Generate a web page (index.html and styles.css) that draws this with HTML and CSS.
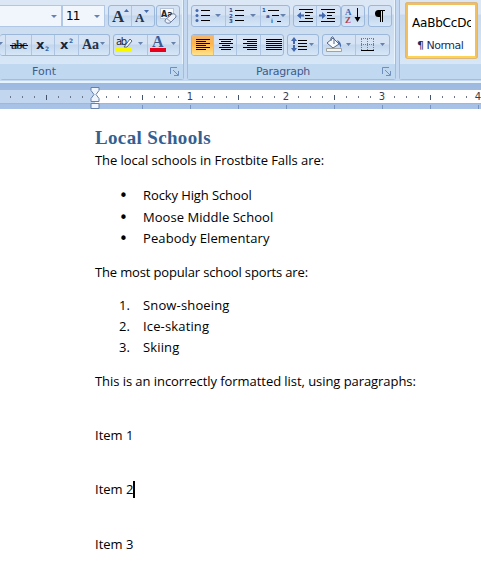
FILE: index.html
```html
<!DOCTYPE html>
<html lang="en">
<head>
<meta charset="utf-8">
<title>Local Schools</title>
<link rel="stylesheet" href="styles.css">
</head>
<body>
<header class="ribbon">
  <section class="group font-group">
    <div class="row">
      <div class="combo family"><i class="arrow"></i></div>
      <div class="combo size"><span>11</span><i class="arrow"></i></div>
      <div class="buttons grow">
        <svg width="46" height="22"><text class="serif" x="4" y="17" font-size="17">A</text><path class="blue" d="M16 7h5l-2.500-3z"/><line class="sep" x1="23.500" x2="23.500" y1="0" y2="22"/><text class="serif" x="27" y="17" font-size="13">A</text><path class="blue" d="M36 5h5l-2.500 3z"/></svg>
      </div>
      <div class="buttons clear">
        <svg width="23" height="22"><rect x="4.500" y="3.500" width="13" height="10" fill="#f7faff" stroke="#b7c4d8"/><text class="sans bold" x="5" y="12" font-size="8">Aa</text><path d="M9 15l7-6q4-1 4 3l-6 6q-5 1-5-3z" fill="#edf2fa" stroke="#6c7f9e"/><path d="M10 13l5 4" stroke="#8797b2"/></svg>
      </div>
    </div>
    <div class="row second">
      <div class="buttons scripts">
        <svg width="110" height="22"><path class="arr" d="M0 8h4l-2.500 3z"/><path class="sep" d="M6.500 0v22M32.500 0v22M55.500 0v22M79.500 0v22"/><text class="serif" x="12" y="15" font-size="12" textLength="16">abc</text><path class="ink" d="M11 11.500h18"/><text class="sans bold" x="37" y="15" font-size="13">x</text><text class="tiny" x="46" y="17">2</text><text class="sans bold" x="61" y="15" font-size="13">x</text><text class="tiny" x="70" y="9">2</text><text class="serif" x="83" y="15" font-size="14" textLength="17">Aa</text><path class="arr" d="M101 8h5l-2.500 3z"/></svg>
      </div>
      <div class="buttons colors">
        <svg width="66" height="22"><path class="sep" d="M34.500 0v22"/><path d="M11 13l6-8 2 2-5 6z" fill="#f7f9fd" stroke="#526685"/><text class="sans" x="3" y="11" font-size="10" textLength="11">ab</text><rect x="3" y="14" width="16" height="4" fill="#f8f800"/><path class="arr" d="M25 8h5l-2.500 3z"/><text class="fontcolor" x="39" y="13">A</text><rect x="37" y="14" width="16" height="4" fill="#e9001b"/><path class="arr" d="M58 8h5l-2.500 3z"/></svg>
      </div>
    </div>
    <footer><span class="font-label">Font</span><svg class="launcher" width="9" height="9"><path d="M.5 7V.5H7M8.500 4v4.500H4M3 3l5 5" /></svg></footer>
  </section>

  <section class="group para-group">
    <div class="row">
      <div class="buttons lists">
        <svg width="98" height="22"><path class="sep" d="M34.500 0v22M69.500 0v22"/><path class="ink" d="M10 5.500h9M10 10.500h9M10 15.500h9M44 5.500h9M44 10.500h9M44 15.500h9M77 5.500h11M81 10.500h7M86 16.500h4"/><g class="blue"><circle cx="6" cy="5.500" r="1.500"/><circle cx="6" cy="10.500" r="1.500"/><circle cx="6" cy="15.500" r="1.500"/></g><path class="arr" d="M24 9h6l-3 3zM59 9h6l-3 3zM89 9h6l-3 3z"/><g class="micro"><text x="38" y="7">1</text><text x="38" y="12.500">2</text><text x="38" y="18">3</text><text x="71" y="7">1</text><text x="75" y="12.500">a</text><text x="80" y="18">i</text></g></svg>
      </div>
      <div class="buttons indents">
        <svg width="47" height="22"><path class="sep" d="M23.500 0v22"/><path class="ink" d="M6 4.500h14M12 7.500h8M12 10.500h5M12 13.500h8M6 16.500h14M28 4.500h14M34 7.500h8M34 10.500h5M34 13.500h8M28 16.500h14"/><path class="blue" d="M4 10.500l4-3.500v2.500h3v2H8V14zM33 10.500L29 7v2.500h-3v2h3V14z"/></svg>
      </div>
      <div class="buttons sort">
        <svg width="23" height="22"><text class="letter" x="4" y="10" fill="#3f66b3">A</text><text class="letter" x="4" y="18" fill="#b83d4c">Z</text><path class="ink" d="M16.500 3v11"/><path d="M13.500 12h6l-3 5z"/></svg>
      </div>
      <div class="buttons mark">
        <svg width="23" height="22"><path d="M17 5h-6.500a3.500 3.500 0 0 0 0 7H12v5h1V6h1v11h1V6h2z"/></svg>
      </div>
    </div>
    <div class="row second">
      <div class="buttons align">
        <svg width="92" height="22"><defs><linearGradient id="hot" x2="0" y2="1"><stop offset="0" stop-color="#efb777"/><stop offset=".45" stop-color="#ffb44a"/><stop offset="1" stop-color="#ffe78f"/></linearGradient></defs><rect width="22" height="22" fill="url(#hot)"/><path class="sep" d="M22.500 0v22M45.500 0v22M69.500 0v22"/><path class="ink" d="M5 5.500h14M5 7.500h10M5 9.500h14M5 11.500h10M5 13.500h14M5 15.500h10M28 5.500h14M30 7.500h10M28 9.500h14M31 11.500h8M28 13.500h14M30 15.500h10M52 5.500h14M56 7.500h10M52 9.500h14M56 11.500h10M52 13.500h14M56 15.500h10M75 5.500h16M75 7.500h16M75 9.500h16M75 11.500h16M75 13.500h16M75 15.500h16"/></svg>
      </div>
      <div class="buttons spacing">
        <svg width="31" height="22"><path class="blue" d="M4 7l3-4 3 4H8v3H6V7zM4 14l3 4 3-4H8v-3H6v3z"/><path class="ink" d="M11 6.500h9M11 9.500h9M11 12.500h9M11 15.500h9"/><path class="arr" d="M22 9h5l-2.500 3z"/></svg>
      </div>
      <div class="buttons shade">
        <svg width="67" height="22"><path class="sep" d="M33.500 0v22"/><path d="M5 9l6-5 6 6-6 4z" fill="#f9fbff" stroke="#53678b"/><path d="M9 7V4q2-3 3 1v5" fill="none" stroke="#53678b"/><path class="blue" d="M15 6q5 2 4 8l-2-4z"/><path d="M4.500 14.500h15v3h-15z" fill="#f5f5f0" stroke="#a0a39f"/><path class="arr" d="M24 9h5l-2.500 3zM58 9h5l-2.500 3z"/><path d="M39.500 5v11M45.500 5v11M51.500 5v11M39 4.500h13M39 10.500h13" fill="none" stroke="#68799a" stroke-dasharray="1 1"/><path class="ink" d="M39 16.500h13"/></svg>
      </div>
    </div>
    <footer><span class="para-label">Paragraph</span><svg class="launcher" width="9" height="9"><path d="M.5 7V.5H7M8.500 4v4.500H4M3 3l5 5" /></svg></footer>
  </section>
  <section class="group styles-group">
    <div class="style-card"><div class="sample">AaBbCcDc</div><div class="style-name">¶ Normal</div></div>
    <footer></footer>
  </section>
</header>

<div class="ruler">
  <svg width="481" height="26">
    <rect y="7" width="95" height="14" fill="#c3d6ef"/><rect x="95" y="7" width="386" height="13" fill="#fff"/>
    <path d="M0 20.500h481" stroke="#9db8df"/>
    <path class="dots" d="M10.500 13v2M22.500 13v2M34.500 13v2M58.500 13v2M70.500 13v2M82.500 13v2M106.500 13v2M118.500 13v2M130.500 13v2M154.500 13v2M166.500 13v2M178.500 13v2M202.500 13v2M214.500 13v2M226.500 13v2M250.500 13v2M262.500 13v2M274.500 13v2M298.500 13v2M310.500 13v2M322.500 13v2M346.500 13v2M358.500 13v2M370.500 13v2M394.500 13v2M406.500 13v2M418.500 13v2M442.500 13v2M454.500 13v2M466.500 13v2"/>
    <path class="ticks" d="M46.500 12v5M142.500 12v5M238.500 12v5M334.500 12v5M430.500 12v5"/>
    <path d="M142.500 22v4M190.500 22v4M238.500 22v4M286.500 22v4M334.500 22v4M382.500 22v4M430.500 22v4M478.500 22v4" stroke="#7793bf"/>
    <g class="numbers"><text x="190" y="17">1</text><text x="286" y="17">2</text><text x="382" y="17">3</text><text x="478" y="17">4</text></g>
    <path d="M91 4.500h8v3l-3 4 3 4v3h-8v-3l3-4-3-4zM91 20.500h8v5h-8z" fill="#edf4fe" stroke="#6580ab"/><path d="M91 18.500h8" stroke="#6580ab"/>
  </svg>
</div>

<main class="document">
  <h1>Local Schools</h1>
  <p class="intro">The local schools in Frostbite Falls are:</p>
  <ul>
    <li><span class="bullet">•</span><span class="rocky">Rocky High School</span></li>
    <li><span class="bullet">•</span><span class="moose">Moose Middle School</span></li>
    <li><span class="bullet">•</span><span class="peabody">Peabody Elementary</span></li>
  </ul>
  <p class="sports">The most popular school sports are:</p>
  <ol>
    <li><span class="number">1.</span><span class="wide">Snow-shoeing</span></li>
    <li><span class="number">2.</span><span class="wide">Ice-skating</span></li>
    <li><span class="number">3.</span><span class="wide">Skiing</span></li>
  </ol>
  <p class="incorrect">This is an incorrectly formatted list, using paragraphs:</p>
  <p class="item">Item 1</p>
  <p class="item">Item 2<i class="caret"></i></p>
  <p class="item last">Item 3</p>
</main>
</body>
</html>
```
FILE: styles.css
```css
* { box-sizing: border-box; }
body { margin: 0; width: 481px; height: 563px; overflow: hidden; background: #fff; color: #000; font-family: "Open Sans", sans-serif; }
svg { display: block; flex-shrink: 0; }
.ribbon { display: flex; gap: 3px; height: 83px; background: #c5d8f1; overflow: hidden; border-bottom: 2px solid #e5f3fd; }
.group { height: 80px; border: 1px solid #a0bddd; border-top: 0; border-radius: 0 0 3px 3px; background: linear-gradient(#dce7f5 0 14px, #c8d9ed 15px, #d7e7f8 64px); box-shadow: inset -1px 0 #e9f3fc; flex-shrink: 0; }
.font-group { width: 184px; border-left: 0; }
.para-group { width: 209px; }
.styles-group { width: 90px; border-right: 0; }
.row { display: flex; height: 34px; padding-top: 5px; }
.row.second { height: 30px; padding-top: 0; }
.buttons { height: 22px; border: 1px solid #9bb7da; border-radius: 3px; background: linear-gradient(#d5e3f4 0 9px, #c3d6ec 10px, #d6e7f8); overflow: hidden; flex-shrink: 0; }
.buttons svg { margin: -1px; }
.combo { height: 22px; background: #f1f6fd; border: 1px solid #b0c8e6; display: flex; align-items: center; justify-content: space-between; font: 12px "DejaVu Sans"; letter-spacing: -1px; }
.family { width: 62px; border-left: 0; justify-content: flex-end; padding-right: 4px; }
.size { width: 43px; padding: 0 4px 0 3px; margin-right: 3px; }
.arrow { width: 0; border: 3px solid transparent; border-top-color: #6582b1; border-bottom: 0; }
.grow { width: 47px; margin-right: 1px; }
.clear { width: 24px; }
.scripts { width: 110px; border-left: 0; margin-right: 3px; }
.colors { width: 67px; }
.para-group .row { padding-left: 3px; }
.lists { width: 99px; margin-right: 3px; }
.indents { width: 48px; margin-right: 0; }
.sort { width: 24px; margin-right: 3px; }
.mark { width: 24px; }
.align { width: 93px; margin-right: 3px; }
.spacing { width: 32px; margin-right: 3px; }
.shade { width: 68px; }
.serif { font-family: "Liberation Serif"; font-weight: bold; fill: #253247; }
.sans { font-family: "DejaVu Sans"; fill: #1d2633; }
.bold { font-weight: bold; }
.tiny { font: bold 6px "DejaVu Sans"; fill: #3d60a5; }
.micro { font: bold 5.5px "DejaVu Sans"; fill: #2d4f95; }
.letter { font: bold 9px "Liberation Serif"; }
.fontcolor { font: bold 16px "Liberation Serif"; fill: #3e5b91; }
.blue { fill: #4268b0; }
.arr { fill: #6582ae; }
.ink { stroke: #000; fill: none; }
.sep { stroke: #adc5e3; fill: none; }
footer { height: 15px; background: #c1d8f1; display: flex; align-items: center; color: #3d5b8d; font: 11px/15px "DejaVu Sans"; }
.font-label { margin-left: 32px; }
.para-label { margin-left: 68px; letter-spacing: -.25px; }
.launcher { margin-left: auto; margin-right: 4px; fill: none; stroke: #6f8fbc; }
.style-card { width: 73px; height: 57px; margin: 2px 0 5px 5px; background: #fff; border: 3px solid #f1bf60; border-bottom-color: #ffd34c; outline: 1px solid #dab782; outline-offset: -1px; border-radius: 3px; overflow: hidden; }
.sample { margin: 11px 2px 0 4px; width: 59px; overflow: hidden; white-space: nowrap; font: 12px/15px "DejaVu Sans"; letter-spacing: -.2px; }
.style-name { padding-left: 9px; margin-top: 8px; color: #172e60; font: 11px/14px "DejaVu Sans"; letter-spacing: -.5px; }
.ruler { height: 26px; background: linear-gradient(#9db9df, #a9c3e7); }
.dots { stroke: #6b7788; }
.ticks { stroke: #44536b; }
.numbers { font: 10px "DejaVu Sans"; text-anchor: middle; fill: #34404f; }
.document { padding: 17px 0 0 95px; font-size: 13px; line-height: 22px; }
h1 { margin: 0; height: 23px; color: #365f91; font: bold 19px/23px "Liberation Serif"; letter-spacing: .35px; }
p, ul, ol { margin: 0; padding: 0; list-style: none; white-space: nowrap; }
.intro, .sports, .incorrect { height: 22px; }
.intro { letter-spacing: -.05px; }
ul { margin-top: 13px; }
li { height: 21.500px; display: flex; }
.rocky { letter-spacing: -.1px; }
.moose { letter-spacing: .05px; }
.peabody { letter-spacing: .1px; }
.wide { letter-spacing: .15px; }
.bullet, .number { width: 24px; flex-shrink: 0; margin-left: 24px; }
.bullet { font: 15px/24px "DejaVu Sans"; }
.sports { margin-top: 12px; letter-spacing: -.15px; }
ol { margin-top: 11px; }
ol li { height: 21px; }
.incorrect { margin-top: 13px; letter-spacing: -.06px; }
.item { height: 22px; margin-top: 32px; }
.last { margin-top: 33px; }
.caret { display: inline-block; width: 2px; height: 17px; background: #000; vertical-align: -4px; }
```
